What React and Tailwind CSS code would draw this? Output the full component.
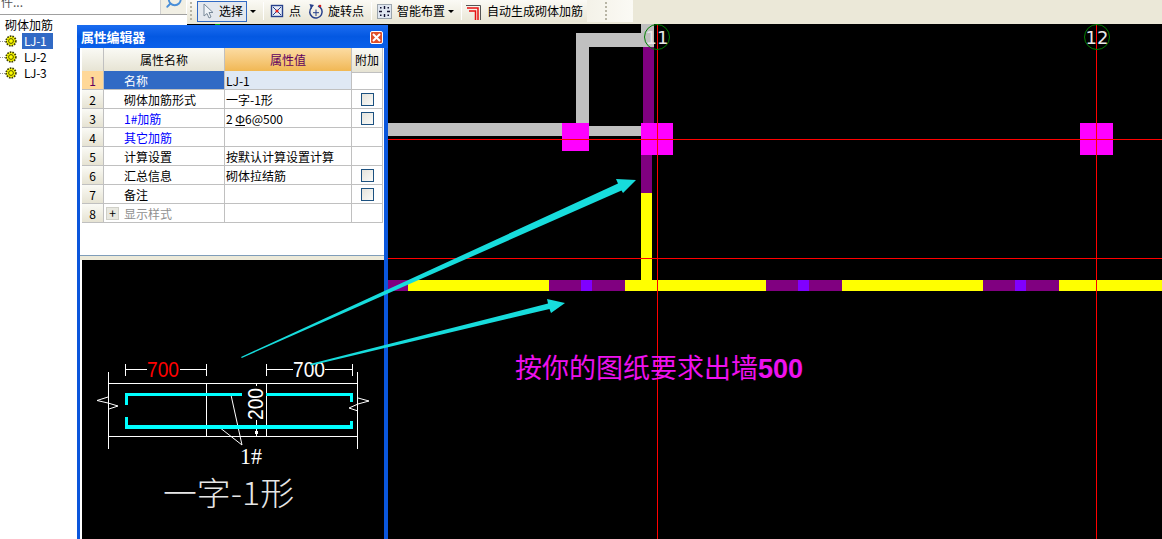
// App.jsx
import React from 'react';
import { Search } from 'lucide-react';

const CJK = "font-['Noto_Sans_CJK_SC','Liberation_Sans',sans-serif]";

const ROWS = [
    { name: '名称', value: 'LJ-1', active: true },
    { name: '砌体加筋形式', value: '一字-1形', check: true },
    { name: '1#加筋', value: 'rebar', blue: true, check: true },
    { name: '其它加筋', blue: true },
    { name: '计算设置', value: '按默认计算设置计算' },
    { name: '汇总信息', value: '砌体拉结筋', check: true },
    { name: '备注', check: true },
    { name: '显示样式', group: true },
];

// x ranges of the long horizontal wall, left to right
const WALL = [
    [388, 408, '#800080'], [408, 549, '#ffff00'], [549, 581, '#800080'], [581, 592, '#8000ff'],
    [592, 625, '#800080'], [625, 766, '#ffff00'], [766, 798, '#800080'], [798, 809, '#8000ff'],
    [809, 842, '#800080'], [842, 983, '#ffff00'], [983, 1015, '#800080'], [1015, 1026, '#8000ff'],
    [1026, 1059, '#800080'], [1059, 1162, '#ffff00'],
];

const Gear = () => (
    <svg width="12" height="12" viewBox="0 0 12 12" className="shrink-0">
        <circle cx="6" cy="6" r="4.8" fill="#ffff00" stroke="#404000" strokeWidth="1.8" strokeDasharray="1.6 1" />
        <circle cx="6" cy="6" r="2.4" fill="#ffff00" stroke="#505000" strokeWidth="1" />
    </svg>
);

const Sep = () => <div className="w-px h-[18px] bg-[#c5c2b0] border-r border-white mx-[4px]" />;

const Grip = () => (
    <div className="flex flex-col gap-[2px] w-[3px]">
        {[0, 1, 2, 3, 4].map((i) => <div key={i} className="w-[2px] h-[2px] bg-[#b8b5a5]" />)}
    </div>
);

const Caret = () => <div className="w-0 h-0 border-x-[3px] border-x-transparent border-t-[3px] border-t-black" />;

const TreeItem = ({ label, active }) => (
    <div className="flex items-center h-[16px]">
        <div className="w-[5px] border-t border-dotted border-[#999]" />
        <Gear />
        <span className={`ml-[5px] w-[31px] h-[16px] pl-[2px] leading-[16px] text-[12px] tracking-[-0.4px] ${active ? 'bg-[#316ac5] text-white' : 'text-black'}`}>
            {label}
        </span>
    </div>
);

const Tree = () => (
    <aside className="w-[187px] h-full bg-white shrink-0 flex flex-col">
        <div className="h-[15px] flex justify-between border-b border-[#a0a0a0] overflow-hidden">
            <span className="text-[12px] leading-[4px] text-[#555] pl-[1px]">件...</span>
            <div className="w-[26px] bg-[#f1efe4] flex justify-center border-l border-[#d0d0d0] mr-[1px]">
                <Search size={18} strokeWidth={2.5} className="text-[#4a8fd8] -mt-[9px] -scale-x-100" />
            </div>
        </div>
        <div className="pt-[3px] pr-[2px] flex-1">
            <div className="text-[12px] leading-[14px] pl-[5px] pb-[1px] text-black">砌体加筋</div>
            <TreeItem label="LJ-1" active />
            <TreeItem label="LJ-2" />
            <TreeItem label="LJ-3" />
        </div>
    </aside>
);

const Toolbar = () => (
    <div className="h-[24px] shrink-0 bg-[#ebe8d8] flex">
        <div className="w-[400px] h-[22px] flex items-center pl-[3px] bg-gradient-to-b from-[#fbfaf5] to-[#e9e6d6] text-[12px] text-black">
            <Grip />
            <div className="ml-[4px] w-[50px] h-[21px] flex items-center border border-[#316ac5] bg-[#e4e8ee] pl-[3px]">
                <svg width="14" height="16" viewBox="0 0 14 16">
                    <path d="M3 1 L3 13 L6 10.5 L8 15 L10 14 L8 9.5 L12 9.5 Z" fill="#f0f4f8" stroke="#7a8a9a" strokeWidth="1" />
                </svg>
                <span className="ml-[4px]">选择</span>
            </div>
            <div className="ml-[3px]"><Caret /></div>
            <div className="ml-[3px]"><Sep /></div>
            <svg width="14" height="14" viewBox="0 0 14 14" className="ml-[2px]">
                <rect x="1.5" y="1.5" width="11" height="11" fill="#e8eef8" stroke="#27408b" strokeWidth="1.4" />
                <path d="M3 3 L11 11 M11 3 L3 11" stroke="#27408b" strokeWidth="1" />
                <circle cx="7" cy="7" r="1.6" fill="#e02020" />
            </svg>
            <span className="ml-[5px]">点</span>
            <svg width="16" height="17" viewBox="0 0 16 17" className="ml-[7px]">
                <path d="M10 3 A6.2 6.2 0 1 1 3.5 4.5" fill="none" stroke="#27408b" strokeWidth="1.5" />
                <path d="M1.5 1 L6 2 L3 6 Z" fill="#27408b" />
                <circle cx="12" cy="3" r="1.3" fill="#d02020" />
                <path d="M8 6.5 V13 M5 9.7 H11" stroke="#27408b" strokeWidth="1" />
            </svg>
            <span className="ml-[4px]">旋转点</span>
            <div className="ml-[3px]"><Sep /></div>
            <svg width="15" height="15" viewBox="0 0 15 15" className="ml-[1px]">
                <rect x="0.5" y="0.5" width="14" height="14" fill="#dfe6f0" stroke="#506070" strokeDasharray="1 1" />
                <path d="M7.5 2 V5 M7.5 10 V13 M2 7.5 H5 M10 7.5 H13" stroke="#101030" strokeWidth="1.4" />
                <rect x="3" y="3" width="1.5" height="1.5" fill="#101030" />
                <rect x="10.5" y="3" width="1.5" height="1.5" fill="#101030" />
                <rect x="3" y="10.5" width="1.5" height="1.5" fill="#101030" />
                <rect x="10.5" y="10.5" width="1.5" height="1.5" fill="#101030" />
            </svg>
            <span className="ml-[5px]">智能布置</span>
            <div className="ml-[3px]"><Caret /></div>
            <div className="ml-[3px]"><Sep /></div>
            <svg width="16" height="17" viewBox="0 0 16 17">
                <path d="M0 2.5 H14.5 V17" fill="none" stroke="#555" strokeWidth="1" />
                <path d="M1 5 H12 V17" fill="none" stroke="#e81010" strokeWidth="1.5" />
                <path d="M3 8 H9.5 V17" fill="none" stroke="#e81010" strokeWidth="1.5" />
            </svg>
            <span className="ml-[5px] whitespace-nowrap">自动生成砌体加筋</span>
        </div>
        <div className="w-[46px] h-[22px] flex items-center pl-[18px] bg-gradient-to-r from-[#f4f2e8] to-[#fbfaf5]">
            <Grip />
        </div>
    </div>
);

const Checkbox = () => (
    <div className="w-[13px] h-[13px] border border-[#1c5180] bg-gradient-to-br from-[#e4e3dc] to-[#fbfbf8]" />
);

const Rebar = () => (
    <span>2 <span className="underline">Φ</span>6@500</span>
);

const PropertyGrid = () => (
    <div className="w-[301px] text-[12px] text-black">
        <div className="grid grid-cols-[22px_121px_127px_31px] h-[23px] leading-[24px] text-center">
            <div className="border-r border-b border-[#c0c0c0] bg-gradient-to-b from-[#fafaf5] to-[#e6e3d3]" />
            <div className="border-r border-b border-[#c0c0c0] bg-gradient-to-b from-[#fafaf5] to-[#e6e3d3]">属性名称</div>
            <div className="border-r border-b border-[#c0c0c0] bg-gradient-to-b from-[#fcdca2] to-[#f0b64f] text-[#60005f]">属性值</div>
            <div className="border-r border-b border-[#c0c0c0] bg-gradient-to-b from-[#fafaf5] to-[#e6e3d3]">附加</div>
        </div>
        {ROWS.map((row, i) => (
            <div key={row.name} className="grid grid-cols-[22px_121px_127px_31px] h-[19px] leading-[20px]">
                <div className={`border-r border-b border-[#c0c0c0] text-center overflow-hidden ${row.active ? 'bg-[#ffd898] text-[#60005f]' : 'bg-gradient-to-b from-[#fafaf5] to-[#e6e3d3]'}`}>{i + 1}</div>
                <div className={`border-r border-b border-[#c0c0c0] flex items-center pl-[20px] overflow-hidden ${row.active ? 'bg-[#316ac5] text-white' : ''} ${row.blue ? 'text-[#0000ff]' : ''} ${row.group ? 'text-[#909090]' : ''}`}>
                    {row.group && (
                        <div className="-ml-[18px] mr-[5px] w-[13px] h-[13px] bg-[#e8e8e0] border border-[#d0d0c8] flex items-center justify-center text-black leading-none">+</div>
                    )}
                    <span className="pt-[2px]">{row.name}</span>
                </div>
                <div className={`border-r border-b border-[#c0c0c0] pl-[1px] whitespace-nowrap overflow-hidden ${row.active ? 'bg-[#dfe8f4]' : ''}`}>
                    {row.value === 'rebar' ? <Rebar /> : row.value}
                </div>
                <div className="border-r border-b border-[#c0c0c0] flex items-center justify-center">
                    {row.check && <Checkbox />}
                </div>
            </div>
        ))}
    </div>
);

// thumbnail of the selected rebar form, drawn in page coordinates
const FormPreview = () => (
    <div className="flex-1 min-h-0 bg-black">
        <svg viewBox="82 260 302 279" className="w-[302px] h-[279px] block" shapeRendering="crispEdges">
            <g stroke="#ffffff" strokeWidth="1" fill="none">
                <path d="M125.5 364 V376 M206.5 364 V376 M125.5 369.5 H147 M180 369.5 H206 M266.5 364 V376 M352.5 364 V376 M266.5 369.5 H293 M325 369.5 H352" />
                <path d="M108.5 372 V449 M357.5 372 V449 M108 383.5 H358 M108 436.5 H358 M206.5 383 V436 M266.5 383 V436" />
                <path d="M256.5 383 V386 M256.5 420 V436" />
            </g>
            <g stroke="#ffffff" strokeWidth="1" fill="none" shapeRendering="auto">
                <path d="M108 397 L97 400.5 L108 403 L118 406 L109 409" />
                <path d="M358 398 L369 401 L358 404 L349 408 L358 411" />
                <path d="M231 395 L242 445 L219 427" />
            </g>
            <rect x="255" y="431" width="3" height="3" fill="#ffffff" />
            <g fill="#00ffff">
                <rect x="125" y="393" width="117" height="3" />
                <rect x="125" y="393" width="3" height="12" />
                <rect x="125" y="425" width="228" height="4" />
                <rect x="125" y="417" width="3" height="12" />
                <rect x="266" y="393" width="87" height="3" />
                <rect x="350" y="395" width="3" height="7" />
                <rect x="350" y="421" width="3" height="8" />
            </g>
            <g fontFamily="'Liberation Sans', sans-serif" fontSize="22" shapeRendering="auto">
                <text x="147" y="377" fill="#ff0000" textLength="32" lengthAdjust="spacingAndGlyphs">700</text>
                <text x="293" y="377" fill="#ffffff" textLength="32" lengthAdjust="spacingAndGlyphs">700</text>
                <text transform="translate(263 420) rotate(-90)" fill="#ffffff" textLength="32" lengthAdjust="spacingAndGlyphs">200</text>
                <text x="240" y="464" fill="#ffffff" fontSize="23" fontFamily="'Liberation Serif', serif" textLength="22" lengthAdjust="spacingAndGlyphs">1#</text>
            </g>
            <text x="163" y="505" fill="#e6e6e6" fontSize="32" fontWeight="300" fontFamily="'Noto Sans CJK SC', sans-serif" textLength="131" lengthAdjust="spacingAndGlyphs">一字-1形</text>
        </svg>
    </div>
);

const PropertyPanel = () => (
    <div className="absolute left-[77px] top-[25px] bottom-0 w-[311px] bg-[#0a56dc] flex flex-col pl-[3px] pr-[4px]">
        <div className="h-[23px] shrink-0 -ml-[3px] -mr-[4px] pl-[4px] pr-[5px] flex items-center justify-between bg-gradient-to-b from-[#1a6cf0] via-[#0458e2] to-[#0a60ea]">
            <span className="text-white font-bold text-[13px] tracking-[-0.2px]">属性编辑器</span>
            <div className="w-[13px] h-[13px] mt-[1px] rounded-[2px] border border-white bg-[#e0502a] flex items-center justify-center">
                <svg width="9" height="9" viewBox="0 0 9 9">
                    <path d="M1 1 L8 8 M8 1 L1 8" stroke="#ffffff" strokeWidth="2" />
                </svg>
            </div>
        </div>
        <div className="flex-1 bg-white pl-[2px] flex flex-col min-h-0">
            <div className="h-[207px] shrink-0 bg-white">
                <PropertyGrid />
            </div>
            <div className="h-[5px] shrink-0 -ml-[2px] bg-[#ece9d8] border-t border-[#7f9db9]" />
            <FormPreview />
        </div>
    </div>
);

const Canvas = () => (
    <div className="flex-1 min-h-0 bg-black">
        <svg viewBox="187 24 975 515" className="w-[975px] h-[515px] block" shapeRendering="crispEdges">
            {/* grey walls */}
            <g fill="#c0c0c0">
                <rect x="576" y="33" width="78" height="14" />
                <rect x="641" y="24" width="13" height="23" />
                <rect x="576" y="33" width="13" height="92" />
                <rect x="388" y="123" width="175" height="13" />
                <rect x="588" y="126" width="54" height="10" />
            </g>
            {/* purple and yellow walls */}
            <rect x="643" y="47" width="11" height="76" fill="#800080" />
            <rect x="641" y="155" width="11" height="38" fill="#800080" />
            <rect x="641" y="193" width="11" height="88" fill="#ffff00" />
            {WALL.map(([x1, x2, color]) => (
                <rect key={x1} x={x1} y="280" width={x2 - x1} height="11" fill={color} />
            ))}
            {/* columns */}
            <g fill="#ff00ff">
                <rect x="562" y="123" width="27" height="28" />
                <rect x="641" y="123" width="32" height="32" />
                <rect x="1080" y="123" width="33" height="32" />
            </g>
            {/* axes */}
            <g fill="#ff0000">
                <rect x="388" y="139" width="774" height="1" />
                <rect x="388" y="258" width="774" height="1" />
                <rect x="657" y="24" width="1" height="515" />
                <rect x="1096" y="24" width="1" height="515" />
            </g>
            <rect x="215" y="24" width="5" height="1" fill="#00a000" />
            <g shapeRendering="auto">
                <circle cx="657" cy="37" r="12.5" fill="none" stroke="#008000" strokeWidth="1" />
                <circle cx="1097" cy="37" r="12.5" fill="none" stroke="#008000" strokeWidth="1" />
                <text x="657" y="43.5" textAnchor="middle" fill="#e8e8e8" fontSize="18" fontFamily="'DejaVu Sans', sans-serif">11</text>
                <text x="1097" y="43.5" textAnchor="middle" fill="#e8e8e8" fontSize="18" fontFamily="'DejaVu Sans', sans-serif">12</text>
                <text x="515" y="378" fill="#ee11ee" fontSize="27" fontFamily="'Noto Sans CJK SC', sans-serif">按你的图纸要求出墙<tspan fontFamily="'Liberation Sans', sans-serif" fontWeight="bold">500</tspan></text>
            </g>
        </svg>
    </div>
);

const Arrows = () => (
    <svg viewBox="0 0 1162 539" className="absolute inset-0 w-[1162px] h-[539px] pointer-events-none">
        <g fill="#17dcdc">
            <path d="M241 357 L241.8 358 L621.5 190.5 L623 193 L636 180 L616 179 L618 183.5 Z" />
            <path d="M310 364 L311 365.5 L549.5 309 L551 313 L565 303 L547 299 L548 303.5 Z" />
        </g>
    </svg>
);

const App = () => {
    return (
        <div className={`relative w-[1162px] h-[539px] overflow-hidden flex bg-white ${CJK}`}>
            <Tree />
            <main className="flex-1 min-w-0 flex flex-col">
                <Toolbar />
                <Canvas />
            </main>
            <PropertyPanel />
            <Arrows />
        </div>
    );
};

export default App;
